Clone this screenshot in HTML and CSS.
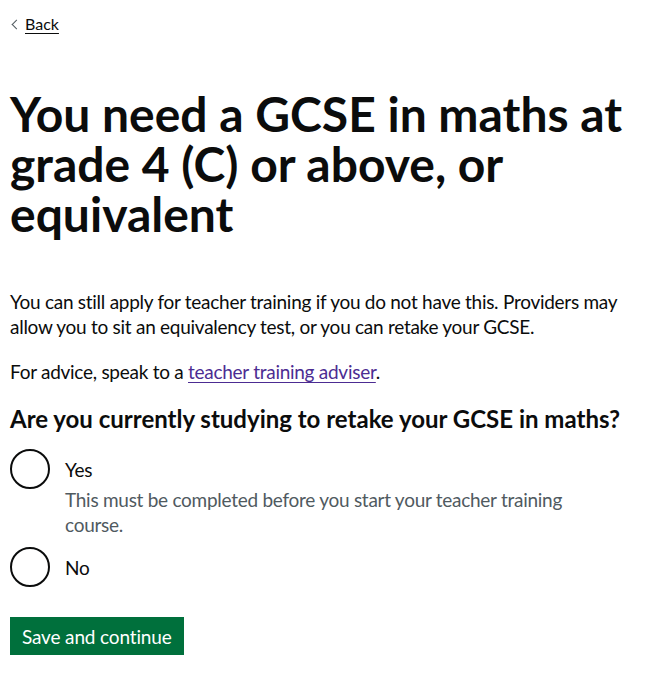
FILE: index.html
```html
<!DOCTYPE html>
<html lang="en">
<head>
<meta charset="utf-8">
<title>You need a GCSE in maths</title>
<link rel="stylesheet" href="styles.css">
</head>
<body>
<div class="page">
  <a class="back-link" href="#">Back</a>
  <main class="main">
    <h1 class="heading-xl">You need a GCSE in maths at grade 4 (C) or above, or equivalent</h1>
    <p class="body">You can still apply for teacher training if you do not have this. Providers may allow you to sit an equivalency test, or you can retake your GCSE.</p>
    <p class="body">For advice, speak to a <a class="link" href="#">teacher training adviser</a>.</p>
    <form class="form" action="#">
      <fieldset class="fieldset">
        <legend class="legend">Are you currently studying to retake your GCSE in maths?</legend>
        <div class="radios">
          <div class="radio-item">
            <input class="radio-input" type="radio" id="retake-yes" name="retake">
            <label class="radio-label" for="retake-yes">Yes</label>
            <div class="radio-hint">This must be completed before you start your teacher training course.</div>
          </div>
          <div class="radio-item">
            <input class="radio-input" type="radio" id="retake-no" name="retake">
            <label class="radio-label" for="retake-no">No</label>
          </div>
        </div>
      </fieldset>
      <button class="button" type="submit">Save and continue</button>
    </form>
  </main>
</div>
</body>
</html>
```
FILE: styles.css
```css
html, body {
  margin: 0;
  padding: 0;
  background: #ffffff;
}

body {
  font-family: "Lato", "Roboto", sans-serif;
  color: #0b0c0c;
  -webkit-font-smoothing: antialiased;
}

.page {
  padding: 0 10px;
}

.back-link {
  display: inline-block;
  position: relative;
  margin-top: 14px;
  padding-left: 15px;
  font-size: 16px;
  line-height: 20px;
  color: #0b0c0c;
  text-decoration: underline;
  text-underline-offset: 3px;
  text-decoration-thickness: 1px;
}

.back-link::before {
  content: "";
  position: absolute;
  left: 3px;
  top: 50%;
  width: 6px;
  height: 6px;
  margin-top: -3.5px;
  border-left: 1px solid #505a5f;
  border-bottom: 1px solid #505a5f;
  transform: rotate(45deg);
}

.main {
  padding-top: 55px;
}

.heading-xl {
  margin: 0 0 50px;
  font-size: 48px;
  line-height: 50px;
  font-weight: 700;
}

.body {
  margin: 0 0 20px;
  font-size: 19px;
  line-height: 25px;
  letter-spacing: -0.27px;
}

.link {
  color: #4c2c92;
  text-decoration: underline;
  text-underline-offset: 3px;
  text-decoration-thickness: 1px;
}

.form {
  margin: 0;
}

.fieldset {
  margin: 0 0 30px;
  padding: 0;
  border: 0;
  min-width: 0;
}

.legend {
  padding: 0;
  margin: 0 0 15px;
  font-size: 24px;
  line-height: 30px;
  font-weight: 700;
}

.radios {
  display: flex;
  flex-direction: column;
  gap: 10px;
}

.radio-item {
  display: grid;
  grid-template-columns: 40px 1fr;
  column-gap: 0;
  min-height: 40px;
}

.radio-input {
  grid-row: 1 / span 2;
  grid-column: 1;
  align-self: start;
  -webkit-appearance: none;
  appearance: none;
  box-sizing: border-box;
  width: 40px;
  height: 40px;
  margin: 0;
  border: 2px solid #0b0c0c;
  border-radius: 50%;
  background: #ffffff;
}

.radio-label {
  grid-column: 2;
  padding: 8px 15px 5px;
  font-size: 19px;
  line-height: 25px;
  letter-spacing: -0.27px;
}

.radio-hint {
  grid-column: 2;
  padding: 0 15px;
  font-size: 19px;
  line-height: 25px;
  letter-spacing: -0.27px;
  color: #505a5f;
  max-width: 520px;
}

.button {
  display: inline-block;
  margin: 0;
  padding: 8px 10px 7px;
  border: 2px solid transparent;
  border-radius: 0;
  background: #00703c;
  box-shadow: 0 2px 0 #002d18;
  color: #ffffff;
  font-family: "Lato", "Roboto", sans-serif;
  font-size: 19px;
  line-height: 19px;
  letter-spacing: -0.15px;
  cursor: pointer;
}
```
